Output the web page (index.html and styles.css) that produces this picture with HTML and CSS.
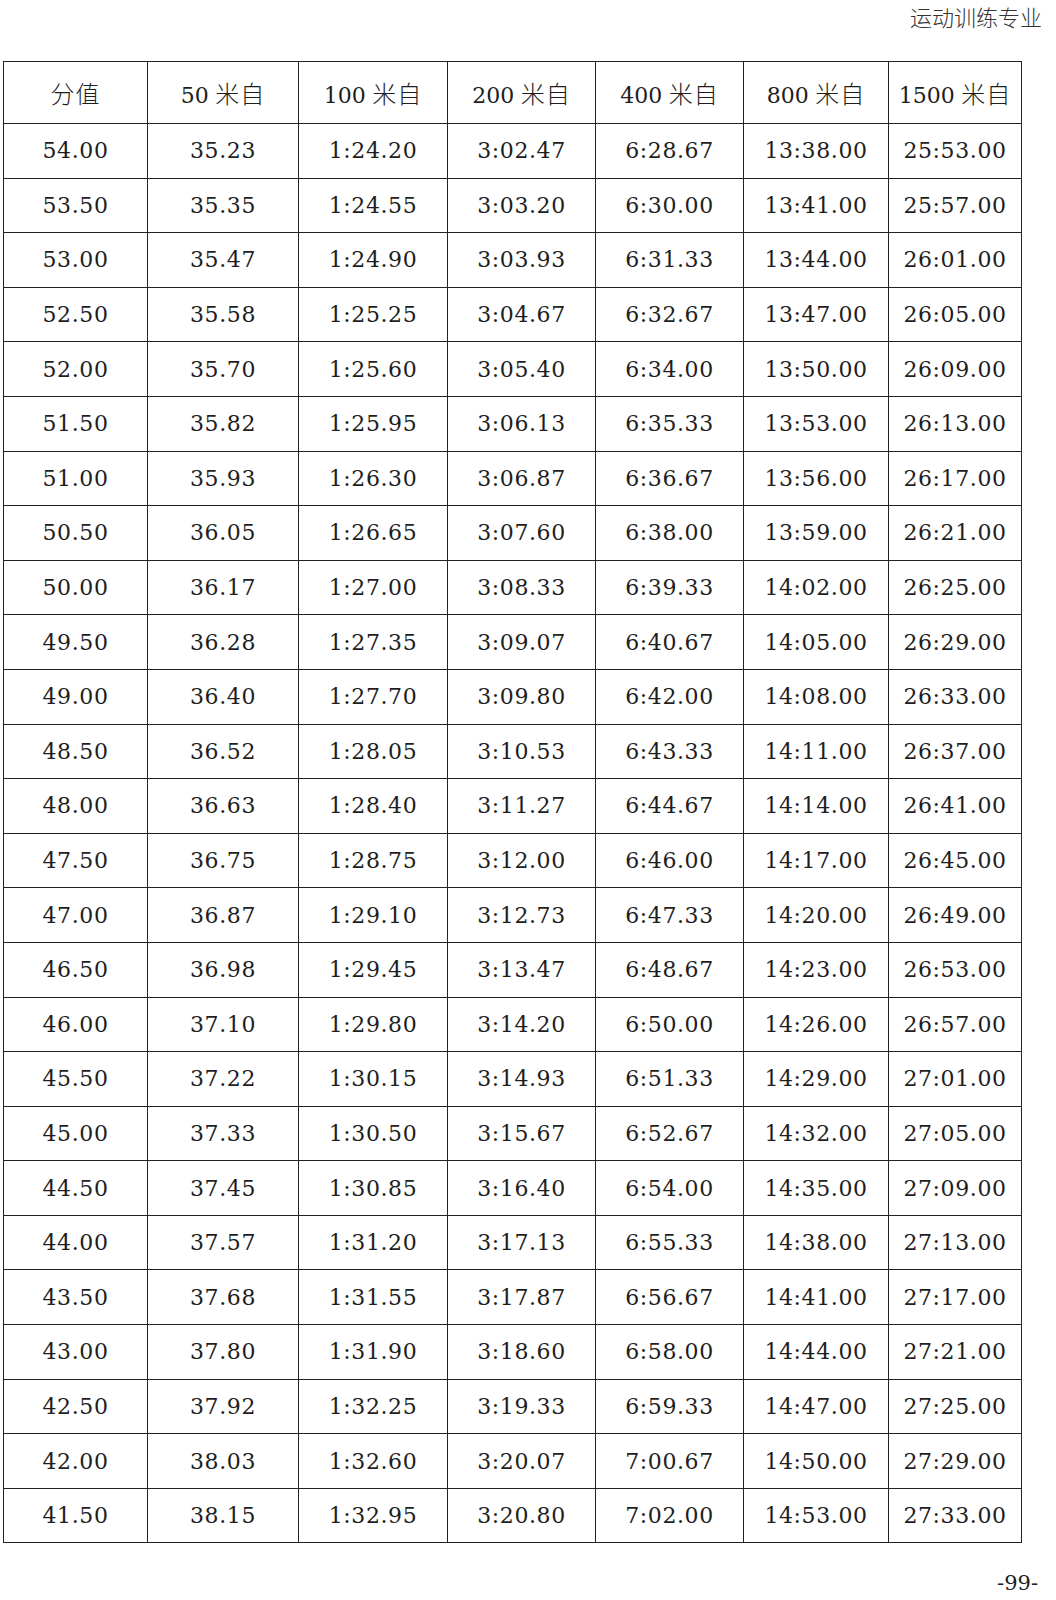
FILE: index.html
```html
<!DOCTYPE html>
<html lang="zh">
<head>
<meta charset="utf-8">
<title>运动训练专业</title>
<link rel="stylesheet" href="styles.css">
</head>
<body>
<div class="page">
  <div class="running-head">运动训练专业</div>
  <table class="score">
    <colgroup>
      <col class="c1"><col class="c2"><col class="c3"><col class="c4"><col class="c5"><col class="c6"><col class="c7">
    </colgroup>
    <thead>
      <tr>
        <th>分值</th>
        <th><span class="num">50</span> 米自</th>
        <th><span class="num">100</span> 米自</th>
        <th><span class="num">200</span> 米自</th>
        <th><span class="num">400</span> 米自</th>
        <th><span class="num">800</span> 米自</th>
        <th><span class="num">1500</span> 米自</th>
      </tr>
    </thead>
    <tbody>
      <tr><td>54.00</td><td>35.23</td><td>1:24.20</td><td>3:02.47</td><td>6:28.67</td><td>13:38.00</td><td>25:53.00</td></tr>
      <tr><td>53.50</td><td>35.35</td><td>1:24.55</td><td>3:03.20</td><td>6:30.00</td><td>13:41.00</td><td>25:57.00</td></tr>
      <tr><td>53.00</td><td>35.47</td><td>1:24.90</td><td>3:03.93</td><td>6:31.33</td><td>13:44.00</td><td>26:01.00</td></tr>
      <tr><td>52.50</td><td>35.58</td><td>1:25.25</td><td>3:04.67</td><td>6:32.67</td><td>13:47.00</td><td>26:05.00</td></tr>
      <tr><td>52.00</td><td>35.70</td><td>1:25.60</td><td>3:05.40</td><td>6:34.00</td><td>13:50.00</td><td>26:09.00</td></tr>
      <tr><td>51.50</td><td>35.82</td><td>1:25.95</td><td>3:06.13</td><td>6:35.33</td><td>13:53.00</td><td>26:13.00</td></tr>
      <tr><td>51.00</td><td>35.93</td><td>1:26.30</td><td>3:06.87</td><td>6:36.67</td><td>13:56.00</td><td>26:17.00</td></tr>
      <tr><td>50.50</td><td>36.05</td><td>1:26.65</td><td>3:07.60</td><td>6:38.00</td><td>13:59.00</td><td>26:21.00</td></tr>
      <tr><td>50.00</td><td>36.17</td><td>1:27.00</td><td>3:08.33</td><td>6:39.33</td><td>14:02.00</td><td>26:25.00</td></tr>
      <tr><td>49.50</td><td>36.28</td><td>1:27.35</td><td>3:09.07</td><td>6:40.67</td><td>14:05.00</td><td>26:29.00</td></tr>
      <tr><td>49.00</td><td>36.40</td><td>1:27.70</td><td>3:09.80</td><td>6:42.00</td><td>14:08.00</td><td>26:33.00</td></tr>
      <tr><td>48.50</td><td>36.52</td><td>1:28.05</td><td>3:10.53</td><td>6:43.33</td><td>14:11.00</td><td>26:37.00</td></tr>
      <tr><td>48.00</td><td>36.63</td><td>1:28.40</td><td>3:11.27</td><td>6:44.67</td><td>14:14.00</td><td>26:41.00</td></tr>
      <tr><td>47.50</td><td>36.75</td><td>1:28.75</td><td>3:12.00</td><td>6:46.00</td><td>14:17.00</td><td>26:45.00</td></tr>
      <tr><td>47.00</td><td>36.87</td><td>1:29.10</td><td>3:12.73</td><td>6:47.33</td><td>14:20.00</td><td>26:49.00</td></tr>
      <tr><td>46.50</td><td>36.98</td><td>1:29.45</td><td>3:13.47</td><td>6:48.67</td><td>14:23.00</td><td>26:53.00</td></tr>
      <tr><td>46.00</td><td>37.10</td><td>1:29.80</td><td>3:14.20</td><td>6:50.00</td><td>14:26.00</td><td>26:57.00</td></tr>
      <tr><td>45.50</td><td>37.22</td><td>1:30.15</td><td>3:14.93</td><td>6:51.33</td><td>14:29.00</td><td>27:01.00</td></tr>
      <tr><td>45.00</td><td>37.33</td><td>1:30.50</td><td>3:15.67</td><td>6:52.67</td><td>14:32.00</td><td>27:05.00</td></tr>
      <tr><td>44.50</td><td>37.45</td><td>1:30.85</td><td>3:16.40</td><td>6:54.00</td><td>14:35.00</td><td>27:09.00</td></tr>
      <tr><td>44.00</td><td>37.57</td><td>1:31.20</td><td>3:17.13</td><td>6:55.33</td><td>14:38.00</td><td>27:13.00</td></tr>
      <tr><td>43.50</td><td>37.68</td><td>1:31.55</td><td>3:17.87</td><td>6:56.67</td><td>14:41.00</td><td>27:17.00</td></tr>
      <tr><td>43.00</td><td>37.80</td><td>1:31.90</td><td>3:18.60</td><td>6:58.00</td><td>14:44.00</td><td>27:21.00</td></tr>
      <tr><td>42.50</td><td>37.92</td><td>1:32.25</td><td>3:19.33</td><td>6:59.33</td><td>14:47.00</td><td>27:25.00</td></tr>
      <tr><td>42.00</td><td>38.03</td><td>1:32.60</td><td>3:20.07</td><td>7:00.67</td><td>14:50.00</td><td>27:29.00</td></tr>
      <tr><td>41.50</td><td>38.15</td><td>1:32.95</td><td>3:20.80</td><td>7:02.00</td><td>14:53.00</td><td>27:33.00</td></tr>
    </tbody>
  </table>
  <div class="page-number">-99-</div>
</div>
</body>
</html>
```

FILE: styles.css
```css
html, body {
  margin: 0;
  padding: 0;
  background: #ffffff;
}

.page {
  width: 1056px;
  height: 1600px;
  display: flex;
  flex-direction: column;
  color: #1e1e1e;
  font-family: "DejaVu Serif", serif;
}

.running-head {
  height: 61px;
  flex: none;
  box-sizing: border-box;
  padding: 2px 14px 0 0;
  text-align: right;
  font-family: "Noto Sans CJK SC", sans-serif;
  font-size: 22px;
  line-height: 28px;
  font-weight: 300;
  color: #333333;
}

.score {
  flex: none;
  margin-left: 3px;
  width: 1018px;
  border-collapse: collapse;
  table-layout: fixed;
}

.c1 { width: 144px; }
.c2 { width: 151px; }
.c3 { width: 149px; }
.c4 { width: 148px; }
.c5 { width: 148px; }
.c6 { width: 145px; }
.c7 { width: 133px; }

.score th,
.score td {
  border: 1.6px solid #222222;
  padding: 0;
  text-align: center;
  vertical-align: middle;
  white-space: nowrap;
}

.score th {
  height: 61px;
  font-family: "Noto Sans CJK SC", sans-serif;
  font-weight: 300;
  font-size: 24px;
  letter-spacing: 1px;
}

.score th .num {
  font-family: "DejaVu Serif", serif;
  font-weight: 300;
  font-size: 22px;
  letter-spacing: 0;
}

.score td {
  height: 53.6px;
  font-family: "DejaVu Serif", serif;
  font-weight: 300;
  font-size: 22px;
  letter-spacing: 0.6px;
}

.page-number {
  flex: none;
  margin-top: 28px;
  padding-right: 18px;
  text-align: right;
  font-family: "DejaVu Serif", serif;
  font-size: 21px;
  line-height: 24px;
}
```
